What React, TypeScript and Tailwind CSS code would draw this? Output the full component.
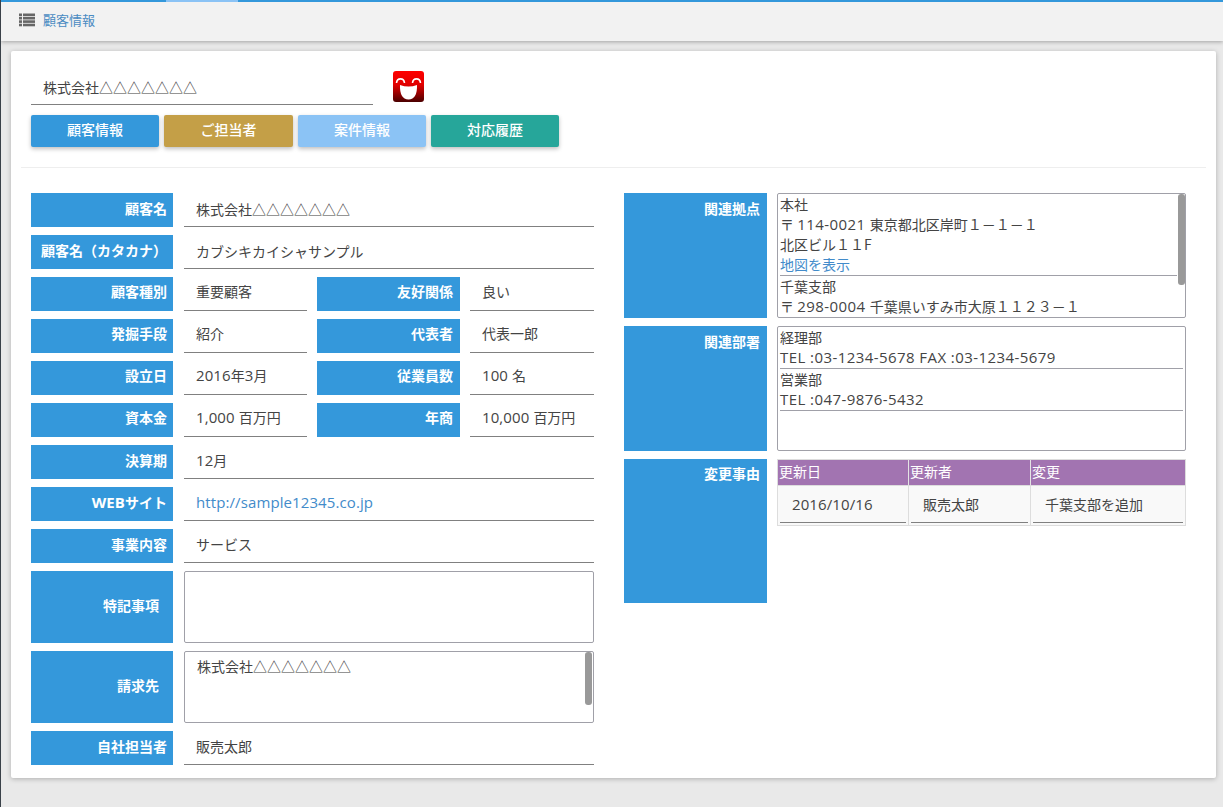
import type { ReactNode } from "react";

// latin runs are a bit wider in the reference than the CJK font's own digits
const L = ({ children, wide = false }: { children: ReactNode; wide?: boolean }) => (
  <span
    className={`text-[15px] ${wide ? "tracking-[0.43px]" : "tracking-[0.1px]"}`}
    style={{ fontFamily: '"Open Sans", sans-serif' }}
  >
    {children}
  </span>
);

const Label = ({ children, className = "" }: { children: ReactNode; className?: string }) => (
  <div className={`bg-[#3498db] text-white font-bold flex justify-end text-[14px] ${className}`}>
    {children}
  </div>
);

const Value = ({ children, className = "" }: { children: ReactNode; className?: string }) => (
  <div className={`h-[34px] border-b border-[#808080] pl-[12px] flex items-center text-[14px] text-[#444] ${className}`}>
    <span>{children}</span>
  </div>
);

const Row = ({ label, children, tight = false }: { label: ReactNode; children: ReactNode; tight?: boolean }) => (
  <div className="flex h-[34px]">
    <Label className="w-[142px] shrink-0 items-center pr-[6px] pb-[3px]">{label}</Label>
    <Value className={`ml-[11px] w-[410px] ${tight ? "" : "pb-[2px]"}`}>{children}</Value>
  </div>
);

const DoubleRow = ({ l1, v1, l2, v2 }: { l1: string; v1: ReactNode; l2: string; v2: ReactNode }) => (
  <div className="flex h-[34px]">
    <Label className="w-[142px] shrink-0 items-center pr-[6px] pb-[5px]">{l1}</Label>
    <Value className="ml-[11px] w-[123px] pb-[4px]">{v1}</Value>
    <Label className="ml-[10px] w-[143px] shrink-0 items-center pr-[7px] pb-[5px]">{l2}</Label>
    <Value className="ml-[10px] w-[124px] pb-[4px]">{v2}</Value>
  </div>
);

const Scrollbar = ({ className = "" }: { className?: string }) => (
  <div className={`absolute right-0 top-0 w-[7px] rounded-[3px] bg-[#999] ${className}`} />
);

const SmileIcon = () => (
  <svg width="31" height="31" viewBox="0 0 31 31" className="ml-[20px] shrink-0 self-start">
    <defs>
      <linearGradient id="red" x1="0" y1="0" x2="0" y2="1">
        <stop offset="0" stopColor="#ff0000" />
        <stop offset="0.45" stopColor="#e00000" />
        <stop offset="1" stopColor="#4a0000" />
      </linearGradient>
    </defs>
    <rect width="31" height="31" rx="3" fill="url(#red)" />
    <path d="M3.5 12 C4 6.5 11 6.5 11.5 12 M19.5 12 C20 6.5 27 6.5 27.5 12" fill="none" stroke="#fff" strokeWidth="1.6" />
    <path d="M7 14 Q15.5 17 24 14 Q24.5 28 15.5 28.5 Q6.5 28 7 14 Z" fill="#fff" />
  </svg>
);

const ListIcon = () => (
  <svg width="16" height="14" viewBox="0 0 16 14" fill="#666">
    <rect x="0" y="0.5" width="3" height="2.6" />
    <rect x="4" y="0.5" width="12" height="2.6" />
    <rect x="0" y="3.9" width="3" height="2.6" />
    <rect x="4" y="3.9" width="12" height="2.6" />
    <rect x="0" y="7.3" width="3" height="2.6" />
    <rect x="4" y="7.3" width="12" height="2.6" />
    <rect x="0" y="10.7" width="3" height="2.6" />
    <rect x="4" y="10.7" width="12" height="2.6" />
  </svg>
);

const tabs = [
  { label: "顧客情報", cls: "bg-[#3498db] w-[128px]" },
  { label: "ご担当者", cls: "bg-[#c49f47] w-[129px]" },
  { label: "案件情報", cls: "bg-[#8bc3f5] w-[128px]" },
  { label: "対応履歴", cls: "bg-[#26a69a] w-[128px]" },
];

const changes = [
  { w: "w-[130px]", t: <L>2016/10/16</L> },
  { w: "w-[121px]", t: "販売太郎" },
  { w: "flex-1", t: "千葉支部を追加" },
];

export default function App() {
  return (
    <div
      className="h-[807px] w-[1223px] overflow-hidden bg-[#e9e9e9] border-l border-[#3a4149] text-[14px] text-[#444]"
      style={{ fontFamily: '"Noto Sans CJK JP", "Open Sans", sans-serif' }}
    >
      <header className="relative h-[41px] bg-[#f2f2f2] border-t-2 border-[#3498db] shadow-[0_1px_4px_rgba(0,0,0,0.3)] flex items-center pl-[18px] pb-[3px]">
        <div className="absolute left-[165px] top-[-2px] h-[2px] w-[72px] bg-[#8bc3f5]" />
        <ListIcon />
        <span className="ml-[8px] text-[13px] text-[#4a8bc2]">顧客情報</span>
      </header>

      <main className="ml-[10px] mt-[10px] w-[1205px] h-[727px] bg-white rounded-[2px] shadow-[0_1px_5px_rgba(0,0,0,0.25)]">
        <div className="pl-[20px] pt-[20px]">
          <div className="flex items-center">
            <div className="w-[342px] h-[34px] border-b border-[#808080] pl-[12px] flex items-center text-[14px]">
              株式会社△△△△△△△
            </div>
            <SmileIcon />
          </div>
          <div className="flex gap-[5px] mt-[10px]">
            {tabs.map((t) => (
              <div
                key={t.label}
                className={`h-[32px] rounded-[2px] text-white text-[14px] font-medium flex items-center justify-center pb-[3px] shadow-[0_2px_4px_rgba(0,0,0,0.25)] ${t.cls}`}
              >
                {t.label}
              </div>
            ))}
          </div>
        </div>
        <div className="mx-[10px] mt-[20px] border-t border-[#eeeeee]" />

        <div className="flex pl-[20px] pt-[25px]">
          <div className="flex w-[563px] flex-col gap-[8px]">
            <Row label="顧客名" tight>株式会社△△△△△△△</Row>
            <Row label="顧客名（カタカナ）" tight>カブシキカイシャサンプル</Row>
            <DoubleRow l1="顧客種別" v1="重要顧客" l2="友好関係" v2="良い" />
            <DoubleRow l1="発掘手段" v1="紹介" l2="代表者" v2="代表一郎" />
            <DoubleRow l1="設立日" v1={<><L>2016</L>年<L>3</L>月</>} l2="従業員数" v2={<><L>100 </L>名</>} />
            <DoubleRow l1="資本金" v1={<><L>1,000 </L>百万円</>} l2="年商" v2={<><L>10,000 </L>百万円</>} />
            <Row label="決算期"><L>12</L>月</Row>
            <Row label={<><L>WEB</L>サイト</>}>
              <span className="text-[#428bca]"><L>http://sample12345.co.jp</L></span>
            </Row>
            <Row label="事業内容">サービス</Row>
            <div className="flex h-[72px]">
              <Label className="w-[142px] shrink-0 items-center pr-[14px] pb-[4px]">特記事項</Label>
              <div className="ml-[11px] w-[410px] border border-[#a0a0a8] rounded-[2px]" />
            </div>
            <div className="flex h-[72px]">
              <Label className="w-[142px] shrink-0 items-center pr-[14px] pb-[4px]">請求先</Label>
              <div className="relative ml-[11px] w-[410px] border border-[#a0a0a8] rounded-[2px] pl-[12px] pt-[4px] leading-[20px]">
                株式会社△△△△△△△
                <Scrollbar className="right-[1px] h-[53px]" />
              </div>
            </div>
            <Row label="自社担当者">販売太郎</Row>
          </div>

          <div className="ml-[30px] flex w-[562px] flex-col gap-[8px]">
            <div className="flex h-[125px]">
              <Label className="w-[143px] shrink-0 items-start pr-[7px] pt-[5px]">関連拠点</Label>
              <div className="relative ml-[10px] w-[409px] border border-[#a0a0a8] rounded-[2px] pl-[2px] overflow-hidden leading-[20px]">
                <div className="pr-[8px]">
                  <div>本社</div>
                  <div>〒 <L wide>114-0021 </L>東京都北区岸町１－１－１</div>
                  <div>北区ビル１１F</div>
                  <div className="text-[#428bca] border-b border-[#a0a0a8] pb-[1px]">地図を表示</div>
                  <div>千葉支部</div>
                  <div>〒 <L wide>298-0004 </L>千葉県いすみ市大原１１２３－１</div>
                </div>
                <Scrollbar className="h-[91px]" />
              </div>
            </div>
            <div className="flex h-[125px]">
              <Label className="w-[143px] shrink-0 items-start pr-[7px] pt-[5px]">関連部署</Label>
              <div className="ml-[10px] w-[409px] border border-[#a0a0a8] rounded-[2px] px-[2px] leading-[20px]">
                <div>経理部</div>
                <div className="border-b border-[#a0a0a8] pb-[1px]"><L wide>TEL :03-1234-5678 FAX :03-1234-5679</L></div>
                <div>営業部</div>
                <div className="border-b border-[#a0a0a8] pb-[1px]"><L wide>TEL :047-9876-5432</L></div>
              </div>
            </div>
            <div className="flex h-[144px]">
              <Label className="w-[143px] shrink-0 items-start pr-[7px] pt-[4px]">変更事由</Label>
              <div className="ml-[10px] w-[409px] self-start border border-[#dddddd] bg-[#dddddd]">
                <div className="flex h-[25px] text-white gap-[1px] bg-[#e4e4e4] leading-[23px]">
                  <div className="w-[130px] bg-[#a274b1] pl-[1px]">更新日</div>
                  <div className="w-[121px] bg-[#a274b1] pl-[1px]">更新者</div>
                  <div className="flex-1 bg-[#a274b1] pl-[1px]">変更</div>
                </div>
                <div className="mt-[1px] flex h-[39px] gap-[1px]">
                  {changes.map((c, i) => (
                    <div key={i} className={`${c.w} bg-[#f9f9f9] px-[2px] pb-[2px]`}>
                      <div className="h-full border-b border-[#808080] pl-[12px] flex items-center">
                        <span>{c.t}</span>
                      </div>
                    </div>
                  ))}
                </div>
              </div>
            </div>
          </div>
        </div>
      </main>
    </div>
  );
}
